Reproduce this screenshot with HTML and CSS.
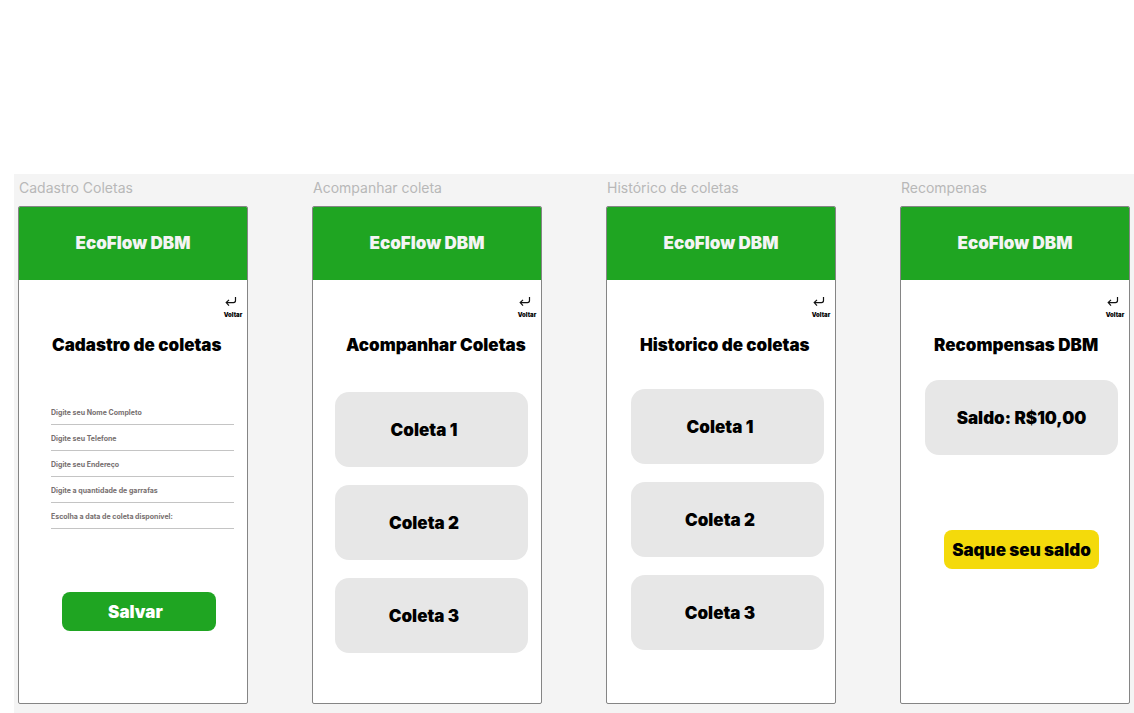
FILE: index.html
```html
<!DOCTYPE html>
<html lang="pt-BR">
<head>
<meta charset="utf-8">
<meta name="viewport" content="width=device-width, initial-scale=1">
<title>EcoFlow DBM</title>
<link rel="stylesheet" href="styles.css">
</head>
<body>
<main class="board">
  <section class="frame">
    <p class="frame-name">Cadastro Coletas</p>
    <article class="screen">
      <header class="brand">EcoFlow DBM</header>
      <a class="back" href="#"><svg class="back-icon" viewBox="0 0 12 12" aria-hidden="true"><path d="M10.5 1v3.6a2 2 0 0 1-2 2H1.2M4 3.8 1.2 6.6 4 9.6"/></svg><span>Voltar</span></a>
      <h1 class="title">Cadastro de coletas</h1>
      <form class="form">
        <input class="field" type="text" aria-label="Digite seu Nome Completo" placeholder="Digite seu Nome Completo">
        <input class="field" type="tel" aria-label="Digite seu Telefone" placeholder="Digite seu Telefone">
        <input class="field" type="text" aria-label="Digite seu Endereço" placeholder="Digite seu Endereço">
        <input class="field" type="text" aria-label="Digite a quantidade de garrafas" placeholder="Digite a quantidade de garrafas">
        <input class="field" type="text" aria-label="Escolha a data de coleta disponível:" placeholder="Escolha a data de coleta disponível:">
        <button class="button save" type="button">Salvar</button>
      </form>
    </article>
  </section>

  <section class="frame">
    <p class="frame-name">Acompanhar coleta</p>
    <article class="screen">
      <header class="brand">EcoFlow DBM</header>
      <a class="back" href="#"><svg class="back-icon" viewBox="0 0 12 12" aria-hidden="true"><path d="M10.5 1v3.6a2 2 0 0 1-2 2H1.2M4 3.8 1.2 6.6 4 9.6"/></svg><span>Voltar</span></a>
      <h1 class="title">Acompanhar Coletas</h1>
      <ul class="cards tracking">
        <li class="card">Coleta 1</li>
        <li class="card">Coleta 2</li>
        <li class="card">Coleta 3</li>
      </ul>
    </article>
  </section>

  <section class="frame">
    <p class="frame-name">Histórico de coletas</p>
    <article class="screen">
      <header class="brand">EcoFlow DBM</header>
      <a class="back" href="#"><svg class="back-icon" viewBox="0 0 12 12" aria-hidden="true"><path d="M10.5 1v3.6a2 2 0 0 1-2 2H1.2M4 3.8 1.2 6.6 4 9.6"/></svg><span>Voltar</span></a>
      <h1 class="title">Historico de coletas</h1>
      <ul class="cards history">
        <li class="card">Coleta 1</li>
        <li class="card">Coleta 2</li>
        <li class="card">Coleta 3</li>
      </ul>
    </article>
  </section>

  <section class="frame">
    <p class="frame-name">Recompenas</p>
    <article class="screen">
      <header class="brand">EcoFlow DBM</header>
      <a class="back" href="#"><svg class="back-icon" viewBox="0 0 12 12" aria-hidden="true"><path d="M10.5 1v3.6a2 2 0 0 1-2 2H1.2M4 3.8 1.2 6.6 4 9.6"/></svg><span>Voltar</span></a>
      <h1 class="title">Recompensas DBM</h1>
      <div class="rewards">
        <p class="card balance">Saldo: R$10,00</p>
        <button class="button withdraw" type="button">Saque seu saldo</button>
      </div>
    </article>
  </section>
</main>
</body>
</html>
```
FILE: styles.css
```css
* {
  box-sizing: border-box;
}

body {
  margin: 0;
  padding: 174px 0 0 14px;
  background: #fff;
  color: #000;
  font-family: Inter, "Liberation Sans", sans-serif;
}

.board {
  display: grid;
  grid-template-columns: repeat(4, minmax(0, 1fr));
  gap: 64px;
  padding: 4px 4px 9px;
  background: #f4f4f4;
}

.frame {
  display: flex;
  flex-direction: column;
}

.frame-name {
  margin: 0 0 8px 1px;
  color: #b8b8b8;
  font-size: 14px;
  line-height: 20px;
  white-space: nowrap;
}

.screen {
  flex: 1;
  min-height: 498px;
  padding-bottom: 48px;
  border: 1px solid #858585;
  border-radius: 2px;
  background: #fff;
  overflow: hidden;
}

.brand,
.title,
.card,
.button {
  font-size: 17px;
  font-weight: 900;
  line-height: 20px;
  white-space: nowrap;
}

.brand {
  padding: 26px 0 27px;
  background: #1fa522;
  color: #f4f4f4;
  text-align: center;
}

.back {
  display: flex;
  flex-direction: column;
  align-items: center;
  gap: 3px;
  width: 28px;
  margin: 16px 0 0 auto;
  color: #000;
  font-size: 6px;
  font-weight: 900;
  line-height: 8px;
  text-decoration: none;
}

.back-icon {
  width: 12px;
  height: 12px;
  margin-right: 4px;
  fill: none;
  stroke: #111;
  stroke-width: 1.2;
}

.title {
  margin: 16px 0 0;
  padding-left: 33px;
}

.form {
  display: flex;
  flex-direction: column;
  padding: 44px 13px 0 32px;
}

.field {
  width: 100%;
  height: 26px;
  padding: 2px 0 0;
  border: 0;
  border-bottom: 1px solid #c4c4c4;
  border-radius: 0;
  background: none;
  color: #000;
  font: 700 7px/10px Inter, "Liberation Sans", sans-serif;
}

.field::placeholder {
  color: #776f6f;
  opacity: 1;
}

.button {
  height: 39px;
  padding: 0;
  border: 0;
  border-radius: 8px;
  font-family: inherit;
}

.save {
  margin: 63px 18px 0 11px;
  padding-right: 7px;
  background: #1fa522;
  color: #fff;
}

.cards {
  display: flex;
  flex-direction: column;
  gap: 18px;
  margin: 0;
  padding: 0;
  list-style: none;
}

.tracking {
  margin: 37px 13px 0 22px;
}

.history {
  margin: 34px 11px 0 24px;
}

.card {
  display: flex;
  align-items: center;
  justify-content: center;
  height: 75px;
  margin: 0;
  border-radius: 14px;
  background: #e7e7e7;
}

.cards .card {
  padding-right: 15px;
}

.rewards {
  display: flex;
  flex-direction: column;
  margin: 25px 11px 0 24px;
}

.withdraw {
  margin: 75px 19px 0;
  background: #f4da0b;
  color: #000;
}
```
